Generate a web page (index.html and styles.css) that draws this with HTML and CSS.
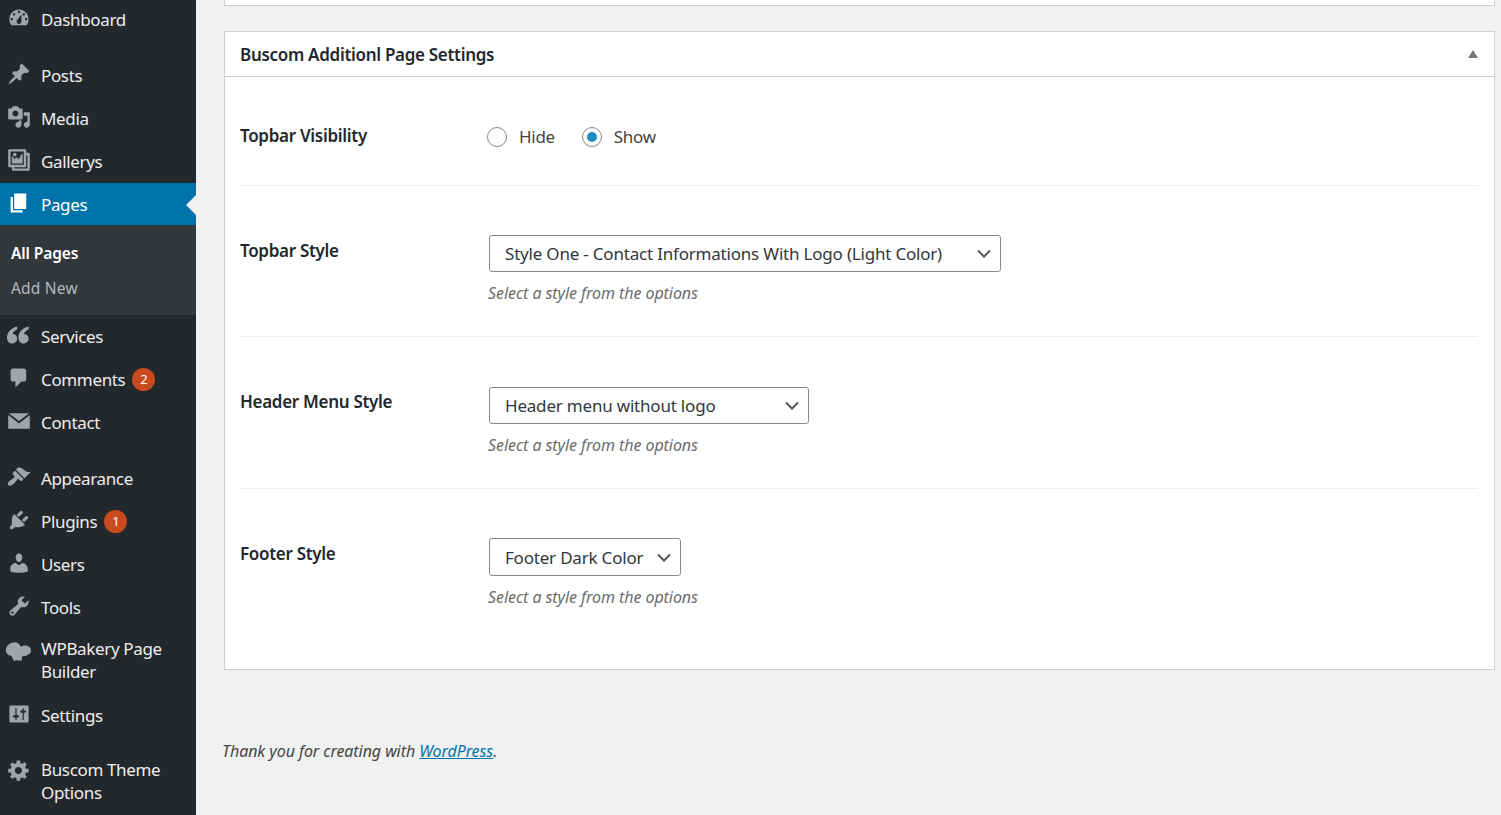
FILE: index.html
```html
<!DOCTYPE html>
<html>
<head>
	<title>Edit Page</title>
	<link rel="stylesheet" href="styles.css">
</head>
<body>
	<div class="sidebar">
		<ul class="menu">
			<li class="item"><svg class="icon" viewBox="0 0 20 20"><path fill-rule="evenodd" d="M3.76 16h12.48c1.1-1.37 1.76-3.11 1.76-5 0-4.42-3.58-8-8-8s-8 3.58-8 8c0 1.89.66 3.63 1.76 5zM10 4c.55 0 1 .45 1 1s-.45 1-1 1-1-.45-1-1 .45-1 1-1zM6 6c.55 0 1 .45 1 1s-.45 1-1 1-1-.45-1-1 .45-1 1-1zm8 0c.55 0 1 .45 1 1s-.45 1-1 1-1-.45-1-1 .45-1 1-1zm-5.37 5.55L12 7v6c0 1.1-.9 2-2 2s-2-.9-2-2c0-.57.24-1.08.63-1.45zM4 10c.55 0 1 .45 1 1s-.45 1-1 1-1-.45-1-1 .45-1 1-1zm12 0c.55 0 1 .45 1 1s-.45 1-1 1-1-.45-1-1 .45-1 1-1z"/></svg><span>Dashboard</span></li>
			<li class="sep"></li>
			<li class="item"><svg class="icon" viewBox="0 0 20 20"><path d="M10.44 3.02l1.82-1.82 6.36 6.35-1.83 1.82c-1.05-.68-2.48-.57-3.41.36l-.75.75c-.92.93-1.04 2.35-.35 3.41l-1.83 1.82-2.41-2.41-2.8 2.79c-.42.42-3.38 2.71-3.8 2.29s1.86-3.39 2.28-3.81l2.79-2.79L4.1 9.36l1.83-1.82c1.05.69 2.48.57 3.41-.36l.75-.75c.93-.92 1.05-2.35.35-3.41z"/></svg><span>Posts</span></li>
			<li class="item"><svg class="icon" viewBox="0 0 20 20"><path fill-rule="evenodd" d="M13 11V4c0-.55-.45-1-1-1h-1.67L9 1H5L3.67 3H2c-.55 0-1 .45-1 1v7c0 .55.45 1 1 1h10c.55 0 1-.45 1-1zM7 4.5c1.38 0 2.5 1.12 2.5 2.5S8.38 9.5 7 9.5 4.5 8.38 4.5 7 5.62 4.5 7 4.5zM14 6h5v10.5c0 1.38-1.12 2.5-2.5 2.5S14 17.88 14 16.5s1.12-2.5 2.5-2.5c.17 0 .34.02.5.05V9h-3V6zm-4 8.05V13h2v3.5c0 1.38-1.12 2.5-2.5 2.5S7 17.88 7 16.5 8.12 14 9.5 14c.17 0 .34.02.5.05z"/></svg><span>Media</span></li>
			<li class="item"><svg class="icon" viewBox="0 0 20 20"><path fill-rule="evenodd" d="M16 4h1.96c.57 0 1.04.47 1.04 1.04v12.92c0 .57-.47 1.04-1.04 1.04H5.04C4.47 19 4 18.53 4 17.96V16H2.04C1.47 16 1 15.53 1 14.96V2.04C1 1.47 1.47 1 2.04 1h12.92c.57 0 1.04.47 1.04 1.04V4zM3 14h11V3H3v11zm5-8.5C8 4.67 7.33 4 6.5 4S5 4.67 5 5.5 5.67 7 6.5 7 8 6.33 8 5.5zm2 4.5s1-5 3-5v8H4V7c2 0 2 3 2 3s.33-2 2-2 2 2 2 2zm7 7V6h-1v8.96c0 .57-.47 1.04-1.04 1.04H6v1h11z"/></svg><span>Gallerys</span></li>
			<li class="item current"><svg class="icon" viewBox="0 0 20 20"><path d="M6 15V2h10v13H6zm-1 1h8v2H3V5h2v11z"/></svg><span>Pages</span></li>
			<li class="submenu">
				<div class="sub-link sub-active">All Pages</div>
				<div class="sub-link">Add New</div>
			</li>
			<li class="item"><svg class="icon" viewBox="0 0 20 20"><path d="M8.500 3C4 4 0 7.500 0 12c0 3 1.500 5 4.300 5 2.400 0 4.200-1.700 4.200-4 0-2.300-1.600-3.800-3.800-3.800.4-1.700 2-3 3.800-3.700zM18 3c-4.500 1-8.500 4.500-8.500 9 0 3 1.500 5 4.300 5 2.400 0 4.200-1.700 4.200-4 0-2.300-1.600-3.800-3.800-3.800.4-1.700 2-3 3.800-3.700z"/></svg><span>Services</span></li>
			<li class="item"><svg class="icon" viewBox="0 0 20 20"><path d="M5 2h9c1.100 0 2 .9 2 2v7c0 1.100-.9 2-2 2h-2l-5 5v-5H5c-1.100 0-2-.9-2-2V4c0-1.100.9-2 2-2z"/></svg><span>Comments</span><b class="badge">2</b></li>
			<li class="item"><svg class="icon" viewBox="0 0 20 20"><path d="M1.500 3.500h17L10 10zM1 5l9 7 9-7v11.500H1z"/></svg><span>Contact</span></li>
			<li class="sep"></li>
			<li class="item"><svg class="icon" viewBox="0 0 20 20"><path d="M14.480 11.060L7.410 3.990l1.500-1.500c.5-.56 2.300-.47 3.510.32 1.210.8 1.430 1.280 2.910 2.100 1.180.64 2.450 1.260 4.450.85zm-.71.71L6.700 4.700 4.930 6.470c-.39.39-.39 1.020 0 1.410l1.060 1.060c.39.39.39 1.030 0 1.420-.6.6-1.430 1.110-2.210 1.690-.35.26-.7.53-1.010.84C1.430 13.230 0 15.800 1.060 16.940c1.140 1.060 3.710-.37 5.030-1.710.31-.31.58-.66.84-1.010.58-.78 1.090-1.610 1.690-2.210.39-.39 1.030-.39 1.420 0l1.060 1.060c.39.39 1.020.39 1.410 0z"/></svg><span>Appearance</span></li>
			<li class="item"><svg class="icon" viewBox="0 0 20 20"><path d="M13.110 4.360L9.870 7.600 8 5.730l3.240-3.240c.35-.34 1.050-.2 1.560.32.52.51.66 1.210.31 1.550zm-8 1.770l.91-1.120 9.010 9.010-1.190.84c-.71.71-2.630 1.160-3.820 1.160H6.140L4.900 17.260c-.59.59-1.540.59-2.120 0-.59-.58-.59-1.530 0-2.120l1.240-1.240v-3.880c0-1.130.4-3.190 1.090-3.890zm7.260 3.970l3.240-3.240c.34-.35 1.040-.21 1.550.31.52.51.66 1.210.31 1.550l-3.240 3.250z"/></svg><span>Plugins</span><b class="badge">1</b></li>
			<li class="item"><svg class="icon" viewBox="0 0 20 20"><path d="M10 9.250c-2.270 0-2.730-3.440-2.730-3.440C7 4.020 7.820 2 9.970 2c2.160 0 2.980 2.020 2.710 3.810 0 0-.41 3.440-2.680 3.440zm0 2.570L12.720 10c2.390 0 4.520 2.330 4.520 4.530v2.490s-3.650 1.130-7.240 1.130c-3.650 0-7.240-1.130-7.240-1.130v-2.490c0-2.250 1.940-4.480 4.470-4.480z"/></svg><span>Users</span></li>
			<li class="item"><svg class="icon" viewBox="0 0 20 20"><path fill-rule="evenodd" d="M16.680 9.770c-1.340 1.340-3.300 1.670-4.950.99l-5.410 6.520c-.99.99-2.590.99-3.580 0s-.99-2.590 0-3.570l6.520-5.420c-.68-1.650-.35-3.610.99-4.950 1.280-1.280 3.120-1.620 4.720-1.060l-2.890 2.890 2.820 2.820 2.860-2.870c.53 1.580.18 3.390-1.080 4.650zM3.810 16.210c.4.39 1.040.39 1.430 0 .4-.4.4-1.040 0-1.430-.39-.4-1.030-.4-1.430 0-.39.39-.39 1.030 0 1.430z"/></svg><span>Tools</span></li>
			<li class="item item-wrap"><svg class="icon" viewBox="0 0 20 20"><path d="M6.500 4.400C2.500 4.400-1 7.500-1 11c0 2.500 2 4.500 4.500 4.600C4.500 17 5 19 6 20l2-1 1 1 1.500-.8 1.500.8c.5-1 .5-2.500.5-4C17 16 20 14 20 11c0-2.500-2.500-4-5-4-1.500 0-2.500.5-3.500 1.200C10.500 5.500 8.500 4.400 6.500 4.400z"/></svg><span>WPBakery Page Builder</span></li>
			<li class="item"><svg class="icon" viewBox="0 0 20 20"><path fill-rule="evenodd" d="M18 16V4c0-.55-.45-1-1-1H3c-.55 0-1 .45-1 1v12c0 .55.45 1 1 1h14c.55 0 1-.45 1-1zM8 11h1c.55 0 1 .45 1 1s-.45 1-1 1H8v1.500c0 .28-.22.5-.5.5s-.5-.22-.5-.5V13H6c-.55 0-1-.45-1-1s.45-1 1-1h1V5.500c0-.28.22-.5.5-.5s.5.22.5.5V11zm5-2h-1c-.55 0-1-.45-1-1s.45-1 1-1h1V5.500c0-.28.22-.5.5-.5s.5.22.5.5V7h1c.55 0 1 .45 1 1s-.45 1-1 1h-1v5.500c0 .28-.22.5-.5.5s-.5-.22-.5-.5V9z"/></svg><span>Settings</span></li>
			<li class="sep"></li>
			<li class="item item-wrap"><svg class="icon" viewBox="0 0 20 20"><path fill-rule="evenodd" d="M18 12h-2.180c-.17.7-.44 1.350-.81 1.930l1.540 1.540-2.100 2.100-1.540-1.540c-.58.36-1.230.63-1.910.79V19H8v-2.180c-.68-.16-1.330-.43-1.910-.79l-1.540 1.540-2.120-2.120 1.540-1.540c-.36-.58-.63-1.230-.79-1.910H1V9.030h2.170c.16-.7.44-1.350.8-1.940L2.430 5.550l2.100-2.100 1.540 1.540c.58-.37 1.240-.64 1.930-.81V2h3v2.180c.68.16 1.330.43 1.910.79l1.540-1.540 2.120 2.120-1.540 1.540c.36.59.64 1.240.8 1.940H18V12zm-8.500 1.500c1.660 0 3-1.340 3-3s-1.340-3-3-3-3 1.340-3 3 1.340 3 3 3z"/></svg><span>Buscom Theme Options</span></li>
		</ul>
	</div>

	<div class="content">
		<div class="panel-end"></div>

		<div class="panel">
			<div class="panel-head">
				<h2>Buscom Additionl Page Settings</h2>
				<span class="toggle"></span>
			</div>
			<div class="panel-body">
				<div class="row row-radio">
					<div class="label label-radio">Topbar Visibility</div>
					<div class="field radios">
						<label class="radio"><input type="radio" name="topbar"> Hide</label>
						<label class="radio"><input type="radio" name="topbar" checked> Show</label>
					</div>
				</div>
				<div class="row row-short">
					<div class="label">Topbar Style</div>
					<div class="field">
						<select class="select select-wide"><option>Style One - Contact Informations With Logo (Light Color)</option></select>
						<p class="desc">Select a style from the options</p>
					</div>
				</div>
				<div class="row row-mid">
					<div class="label">Header Menu Style</div>
					<div class="field">
						<select class="select select-mid"><option>Header menu without logo</option></select>
						<p class="desc">Select a style from the options</p>
					</div>
				</div>
				<div class="row row-last">
					<div class="label">Footer Style</div>
					<div class="field">
						<select class="select select-small"><option>Footer Dark Color</option></select>
						<p class="desc">Select a style from the options</p>
					</div>
				</div>
			</div>
		</div>

		<p class="thanks">Thank you for creating with <a href="#">WordPress</a>.</p>
	</div>
</body>
</html>
```

FILE: styles.css
```css
html, body {
	height: 100%;
}
body {
	margin: 0;
	display: flex;
	height: 815px;
	overflow: hidden;
	background: #f1f1f1;
	font-family: "Noto Sans", "Open Sans", sans-serif;
	font-size: 17px;
	color: #444;
}

/* left admin menu */
.sidebar {
	flex: 0 0 196px;
	width: 196px;
	background: #23282d;
	overflow: hidden;
}
.menu {
	list-style: none;
	margin: -2px 0 0;
	padding: 0;
}
.item {
	position: relative;
	display: flex;
	align-items: center;
	min-height: 43px;
	box-sizing: border-box;
	padding: 9.5px 12px 9.5px 41px;
	color: #eee;
	line-height: 23px;
	letter-spacing: -0.35px;
}
.item-wrap {
	padding-top: 8px;
	padding-bottom: 11px;
}
.icon {
	position: absolute;
	left: 7px;
	top: 8px;
	width: 24px;
	height: 24px;
	fill: #a0a5aa;
	overflow: visible;
}
.sep {
	height: 13px;
}
.current {
	background: #0073aa;
	color: #fff;
	height: 42px;
	min-height: 42px;
}
.current .icon {
	fill: #fff;
}
.current::after {
	content: "";
	position: absolute;
	right: 0;
	top: 12px;
	border: 10px solid transparent;
	border-right-color: #f1f1f1;
	border-left-width: 0;
}
.submenu {
	background: #32373c;
	padding: 11px 0 9px;
	height: 90px;
	box-sizing: border-box;
}
.sub-link {
	height: 35px;
	line-height: 35px;
	padding-left: 11px;
	font-size: 15.5px;
	color: #b4b9be;
	letter-spacing: 0.2px;
}
.sub-active {
	color: #fff;
	font-weight: 600;
	letter-spacing: -0.1px;
}
.badge {
	width: 23px;
	height: 23px;
	margin-left: 7px;
	border-radius: 50%;
	background: #ca4a1f;
	color: #fff;
	font-size: 13px;
	font-weight: 400;
	line-height: 23px;
	text-align: center;
}

/* main area */
.content {
	flex: 1;
	padding: 0 6px 0 28px;
	min-width: 0;
}
.panel-end {
	height: 5px;
	background: #fff;
	border: 1px solid #ccd0d4;
	border-top: 0;
	margin-bottom: 25px;
}
.panel {
	background: #fff;
	border: 1px solid #ccd0d4;
}
.panel-head {
	display: flex;
	align-items: center;
	justify-content: space-between;
	height: 44px;
	padding: 0 16px 0 15px;
	border-bottom: 1px solid #ccd0d4;
}
.panel-head h2 {
	margin: 0;
	font-size: 17px;
	font-weight: 600;
	color: #23282d;
	letter-spacing: -0.3px;
}
.toggle {
	width: 0;
	height: 0;
	border: 5px solid transparent;
	border-top-width: 0;
	border-bottom: 8px solid #72777c;
}
.panel-body {
	padding: 0 16px 0 15px;
}
.row {
	display: flex;
	height: 152px;
	box-sizing: border-box;
	padding-top: 49px;
	border-bottom: 1px solid #eee;
}
.row-short {
	height: 151px;
}
.row-mid {
	padding-top: 50px;
}
.row-mid .label {
	padding-top: 2.5px;
}
.row-radio {
	height: 109px;
	padding-top: 47px;
}
.row-last {
	border-bottom: 0;
	height: 180px;
}
.label {
	flex: 0 0 248px;
	padding-top: 3.5px;
	font-weight: 600;
	color: #23282d;
	line-height: 23px;
	letter-spacing: -0.3px;
}
.label-radio {
	padding-top: 0;
}
.radios {
	display: flex;
	gap: 28px;
}
.radio {
	display: flex;
	align-items: center;
	gap: 12px;
	height: 25px;
	letter-spacing: -0.3px;
}
.radio input {
	appearance: none;
	display: flex;
	align-items: center;
	justify-content: center;
	width: 20px;
	height: 20px;
	margin: 0 0 0 -1px;
	border: 1px solid #7e8993;
	border-radius: 50%;
	background: #fff;
}
.radio input:checked::before {
	content: "";
	width: 10px;
	height: 10px;
	border-radius: 50%;
	background: #1e8cbe;
}
.select {
	display: block;
	appearance: none;
	height: 37px;
	margin: 0 0 0 1px;
	padding: 0 32px 0 15px;
	border: 1px solid #7e8993;
	border-radius: 3px;
	color: #32373c;
	font-family: inherit;
	font-size: 17px;
	letter-spacing: -0.2px;
	background: #fff url('data:image/svg+xml;utf8,<svg xmlns="http://www.w3.org/2000/svg" width="14" height="9" viewBox="0 0 14 9"><path d="M1 1.500l6 6 6-6" fill="none" stroke="%23555" stroke-width="2"/></svg>') no-repeat right 9px center;
}
.select-wide {
	width: 512px;
}
.select-mid {
	width: 320px;
}
.select-small {
	width: 192px;
	height: 38px;
}
.desc {
	margin: 10px 0 0;
	font-size: 16px;
	font-style: italic;
	color: #6c6c6c;
	line-height: 23px;
	letter-spacing: -0.07px;
}
.thanks {
	margin: 70px 0 0 -2px;
	font-size: 16px;
	font-style: italic;
	line-height: 23px;
	letter-spacing: -0.07px;
}
.thanks a {
	color: #0073aa;
}
```
